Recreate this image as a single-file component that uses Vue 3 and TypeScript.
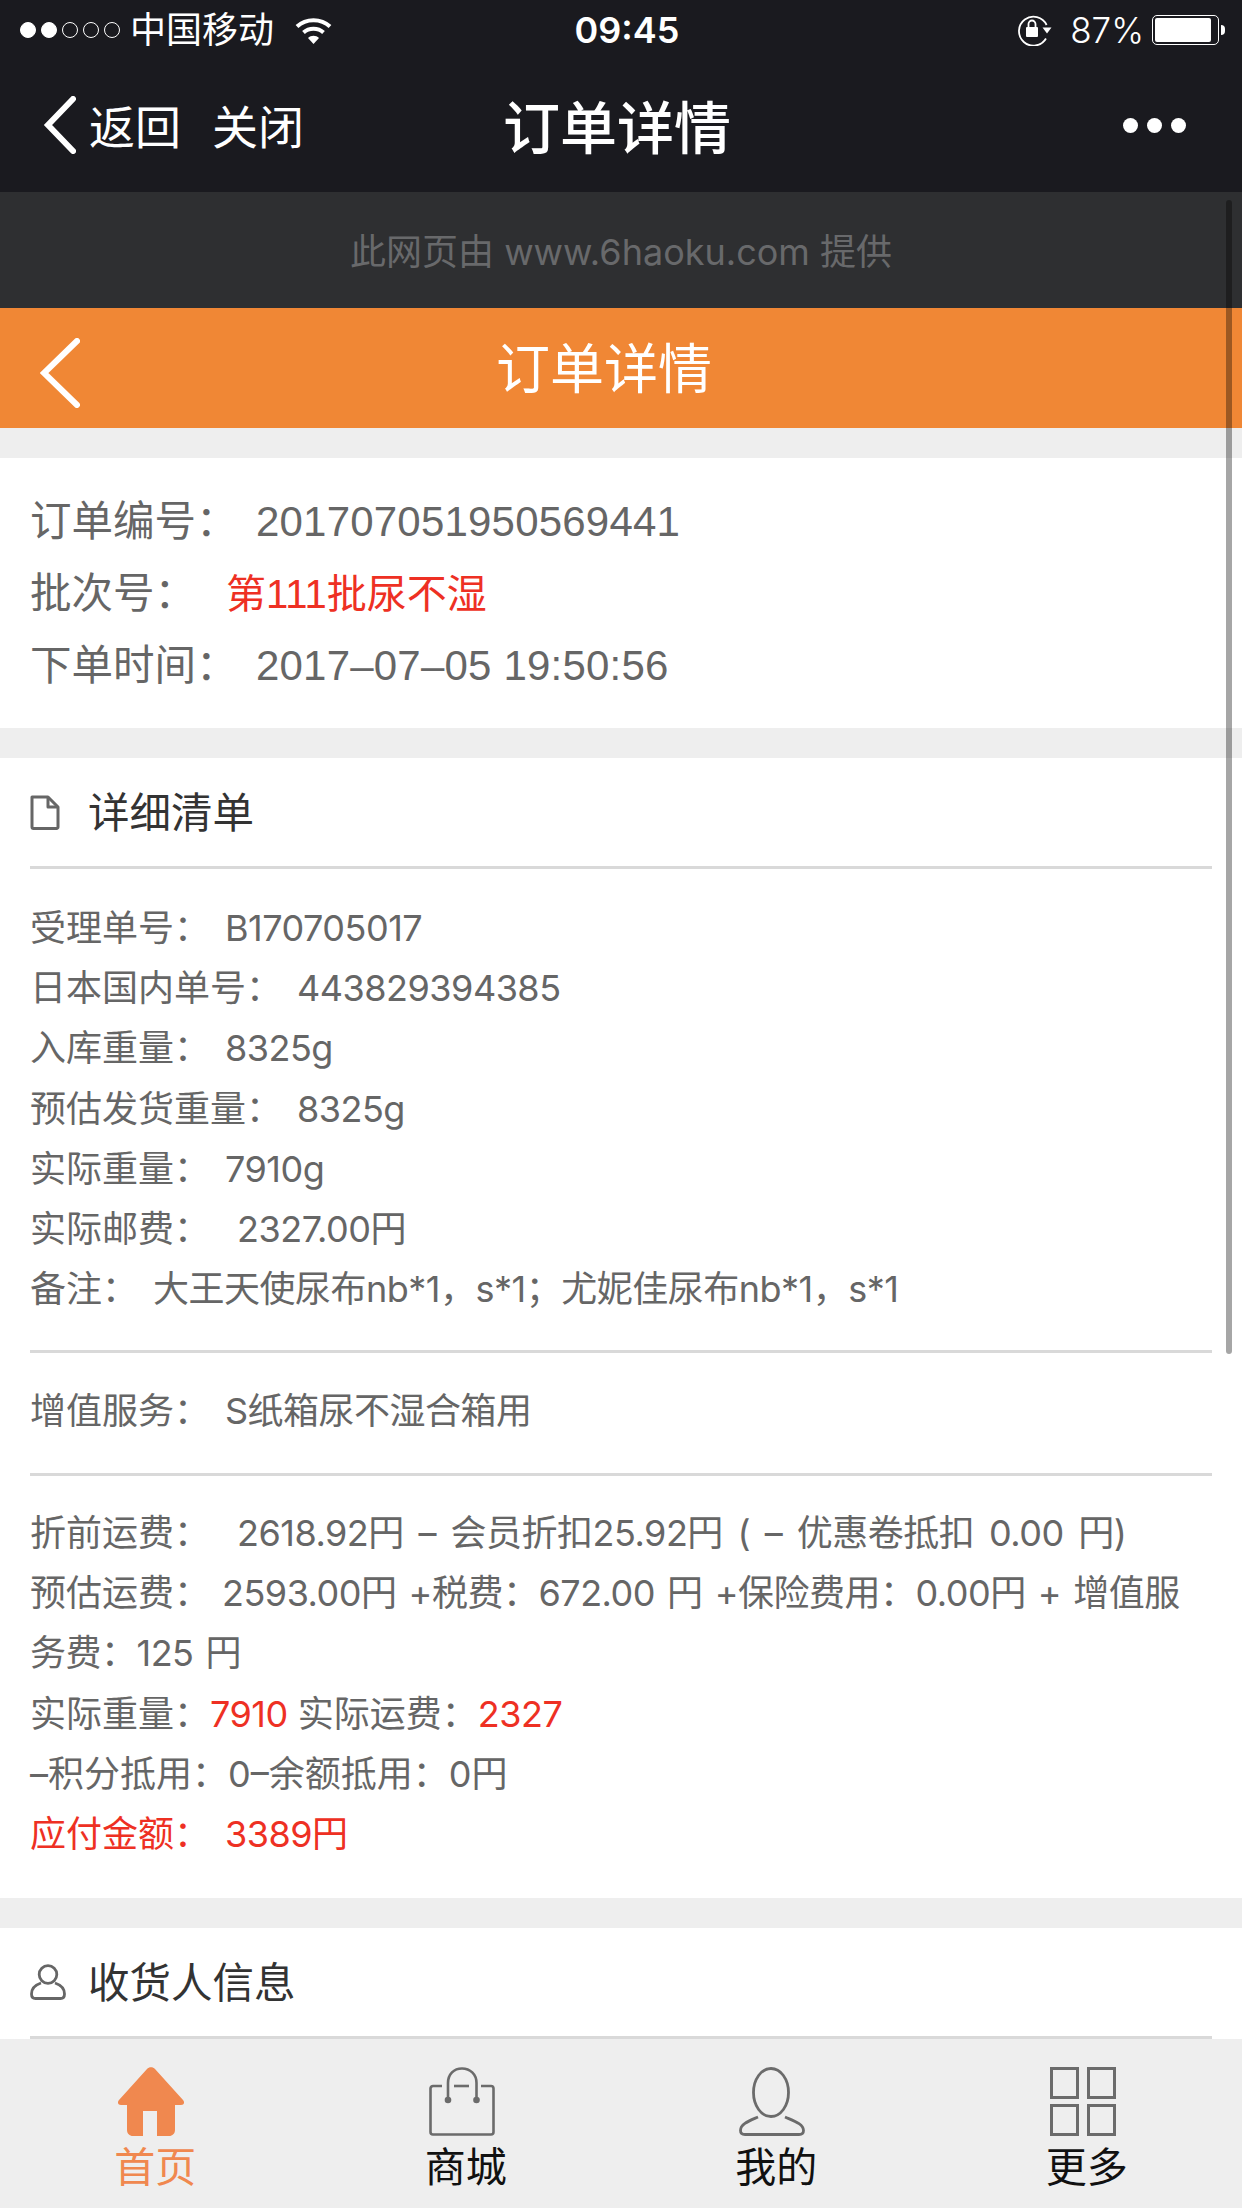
<template>
  <div class="page">
    <header class="wx-head">
      <div class="status">
        <div class="status-left">
          <span class="sig on"></span><span class="sig on"></span><span class="sig"></span><span class="sig"></span><span class="sig"></span>
          <span class="carrier">中国移动</span>
          <svg class="wifi" viewBox="0 0 37 27" width="37" height="27" fill="none" stroke="#fff" stroke-width="4">
            <path d="M2 9.5C11 1 26 1 35 9.5" />
            <path d="M8.5 15.5C14 10.5 23 10.5 28.5 15.5" />
            <path d="M13 21 18.5 27 24 21C21 18 16 18 13 21Z" fill="#fff" stroke="none" />
          </svg>
        </div>
        <div class="clock">09:45</div>
        <div class="status-right">
          <svg class="lock" viewBox="0 0 36 32" width="36" height="32" fill="none">
            <path d="M29 24.5A14.5 14.5 0 1 1 29.6 11" stroke="#fff" stroke-width="1.8" />
            <path d="M25.5 13.5h9l-4.5 6z" fill="#fff" />
            <rect x="9" y="13" width="12" height="10" rx="1" fill="#fff" />
            <path d="M11.5 13V10a3.5 3.5 0 0 1 7 0v3" stroke="#fff" stroke-width="1.8" />
          </svg>
          <span class="pct">87%</span>
          <div class="battery"><div class="battery-fill"></div></div>
          <div class="battery-nub"></div>
        </div>
      </div>
      <nav class="wx-nav">
        <div class="wx-left">
          <svg class="wx-back" viewBox="0 0 33 58" width="33" height="58" fill="none" stroke="#fff" stroke-width="6" stroke-linecap="round">
            <path d="M30 3 5 29 30 55" />
          </svg>
          <span>返回</span>
          <span class="wx-close">关闭</span>
        </div>
        <div class="wx-title">订单详情</div>
        <div class="wx-more"><i></i><i></i><i></i></div>
      </nav>
    </header>

    <div class="provider">此网页由 www.6haoku.com 提供</div>

    <div class="orange-bar">
      <svg class="orange-back" viewBox="0 0 40 70" width="40" height="70" fill="none" stroke="#fff" stroke-width="6" stroke-linecap="round">
        <path d="M37 3 4 35 37 67" />
      </svg>
      <h1>订单详情</h1>
    </div>

    <section class="card order-info">
      <div class="info-row">
        <span class="info-label">订单编号：</span><span class="info-val">201707051950569441</span>
      </div>
      <div class="info-row">
        <span class="info-label short">批次号：</span><span class="info-val red batch">第111批尿不湿</span>
      </div>
      <div class="info-row">
        <span class="info-label">下单时间：</span><span class="info-val">2017–07–05 19:50:56</span>
      </div>
    </section>

    <section class="card">
      <div class="card-head">
        <svg viewBox="0 0 30 35" width="30" height="35" fill="none" stroke="#666" stroke-width="3" stroke-linejoin="round">
          <path d="M2 2h16l10 10v20a1.5 1.5 0 0 1-1.500 1.500H3.500A1.500 1.500 0 0 1 2 32z" />
          <path d="M18 2v10h10" />
        </svg>
        <h2>详细清单</h2>
      </div>
      <div class="block first">
        <div v-for="row in detailRows" :key="row.label" class="line">
          {{ row.label }}<span :class="['val', { wide: row.wide }]">{{ row.value }}</span>
        </div>
      </div>
      <div class="block service">
        <div class="line">增值服务：<span class="val">S纸箱尿不湿合箱用</span></div>
      </div>
      <div class="block price">
        <div class="line">折前运费：<span class="val wide">2618.92円 – 会员折扣25.92円 ( – 优惠卷抵扣 0.00 円)</span></div>
        <div class="line">预估运费：<span class="val mid">2593.00円 +税费：672.00 円 +保险费用：0.00円 + 增值服务费：125 円</span></div>
        <div class="line">实际重量：<span class="red tight">7910</span> 实际运费：<span class="red tight">2327</span></div>
        <div class="line">–积分抵用：0–余额抵用：0円</div>
        <div class="line red">应付金额：<span class="val">3389円</span></div>
      </div>
    </section>

    <section class="card">
      <div class="card-head">
        <svg class="person-small" viewBox="0 0 36 36" width="36" height="36" fill="none" stroke="#666" stroke-width="2.800">
          <circle cx="18" cy="10.500" r="8.800" />
          <path d="M11 19C5 21 1.500 25 1.500 30c0 3 1.500 4.500 4 4.500h25c2.500 0 4-1.500 4-4.500 0-5-3.500-9-9.500-11" />
        </svg>
        <h2>收货人信息</h2>
      </div>
    </section>

    <div class="scrollbar"></div>

    <footer class="tabbar">
      <div v-for="tab in tabs" :key="tab.name" :class="['tab', { active: tab.active }]">
        <svg v-if="tab.name === '首页'" viewBox="0 0 66 69" width="66" height="69">
          <path
            fill="#f0884f"
            d="M29 2C31 -.5 35 -.5 37 2L65 33C67 35.500 66 38 63 38H57V63C57 66.500 54.500 69 51 69H39V44H25V69H15C11.500 69 9 66.500 9 63V38H3C0 38 -1 35.500 1 33Z"
          />
        </svg>
        <svg v-else-if="tab.name === '商城'" viewBox="0 0 66 69" width="66" height="69" fill="none" stroke="#6b6b6b" stroke-width="2.600">
          <path d="M13 19H4A2.500 2.500 0 0 0 1.500 21.500V65A2.500 2.500 0 0 0 4 67.500H62A2.500 2.500 0 0 0 64.500 65V21.500A2.500 2.500 0 0 0 62 19H52" />
          <path d="M25 19H40" />
          <path d="M19 32V16C19 7 25 1.500 33 1.500S47.500 7 47.500 16V32" />
          <circle cx="19" cy="33" r="3.300" fill="#6b6b6b" stroke="none" />
          <circle cx="47.500" cy="33" r="3.300" fill="#6b6b6b" stroke="none" />
        </svg>
        <svg v-else-if="tab.name === '我的'" viewBox="0 0 66 69" width="66" height="69" fill="none" stroke="#6b6b6b" stroke-width="2.800">
          <ellipse cx="32" cy="25.500" rx="17.500" ry="24" />
          <path d="M19 50C10 54 1.500 57 1.500 63.500 1.500 66.500 3 67.500 6 67.500H60C63 67.500 64.500 66.500 64.500 63.500 64.500 57 55 54 46 50" />
        </svg>
        <svg v-else viewBox="0 0 66 69" width="66" height="69" fill="none" stroke="#6b6b6b" stroke-width="3">
          <rect x="1.500" y="1.500" width="26" height="29" />
          <rect x="38.500" y="1.500" width="26" height="29" />
          <rect x="1.500" y="38.500" width="26" height="29" />
          <rect x="38.500" y="38.500" width="26" height="29" />
        </svg>
        <span class="tab-name">{{ tab.name }}</span>
      </div>
    </footer>
  </div>
</template>

<script setup lang="ts">
interface DetailRow {
  label: string;
  value: string;
  wide?: boolean;
}

const detailRows: DetailRow[] = [
  { label: "受理单号：", value: "B170705017" },
  { label: "日本国内单号：", value: "443829394385" },
  { label: "入库重量：", value: "8325g" },
  { label: "预估发货重量：", value: "8325g" },
  { label: "实际重量：", value: "7910g" },
  { label: "实际邮费：", value: "2327.00円", wide: true },
  { label: "备注：", value: "大王天使尿布nb*1，s*1；尤妮佳尿布nb*1，s*1" },
];

const tabs = [
  { name: "首页", active: true },
  { name: "商城", active: false },
  { name: "我的", active: false },
  { name: "更多", active: false },
];
</script>

<style>
html,
body {
  margin: 0;
  background: #eeeeee;
}
</style>

<style scoped>
.page {
  position: relative;
  width: 1242px;
  height: 2208px;
  overflow: hidden;
  background: #eeeeee;
  font-family: Inter, "Noto Sans CJK SC", sans-serif;
  color: #666;
}

.wx-head {
  height: 192px;
  background: #1a1a1f;
  color: #fff;
}

.status {
  display: grid;
  grid-template-columns: 1fr auto 1fr;
  align-items: center;
  height: 60px;
  padding: 0 17px 0 20px;
}

.status-left {
  display: flex;
  align-items: center;
}

.sig {
  box-sizing: border-box;
  width: 16px;
  height: 16px;
  margin-right: 5px;
  border: 1px solid #fff;
  border-radius: 50%;
}

.sig.on {
  background: #fff;
}

.carrier {
  margin-left: 5px;
  font-size: 36px;
  line-height: 60px;
}

.wifi {
  margin-left: 21px;
}

.clock {
  margin-left: 9px;
  font-size: 36px;
  font-weight: 600;
  line-height: 60px;
}

.status-right {
  display: flex;
  align-items: center;
  justify-content: flex-end;
}

.pct {
  margin-left: 17px;
  font-size: 35px;
  font-weight: 300;
}

.battery {
  box-sizing: border-box;
  width: 67px;
  height: 30px;
  margin-left: 8px;
  padding: 2px;
  border: 1px solid #fff;
  border-radius: 5px;
}

.battery-fill {
  width: 56px;
  height: 100%;
  background: #fff;
  border-radius: 2px;
}

.battery-nub {
  width: 4px;
  height: 10px;
  margin-left: 2px;
  background: #fff;
  border-radius: 0 4px 4px 0;
}

.wx-nav {
  display: grid;
  grid-template-columns: 1fr auto 1fr;
  align-items: center;
  height: 132px;
  padding: 0 56px 4px 43px;
  box-sizing: border-box;
}

.wx-left {
  display: flex;
  align-items: center;
  font-size: 46px;
}

.wx-back {
  margin-right: 13px;
  margin-top: 2px;
}

.wx-close {
  margin-left: 31px;
}

.wx-title {
  margin-left: 5px;
  font-size: 57px;
  font-weight: 500;
}

.wx-more {
  display: flex;
  justify-content: flex-end;
  gap: 9px;
  margin-top: 2px;
}

.wx-more i {
  width: 15px;
  height: 15px;
  background: #fff;
  border-radius: 50%;
}

.provider {
  height: 116px;
  background: #2e2f31;
  color: #68696b;
  font-size: 36px;
  line-height: 121px;
  text-align: center;
}

.orange-bar {
  display: flex;
  position: relative;
  align-items: center;
  justify-content: center;
  box-sizing: border-box;
  height: 120px;
  padding: 0 34px 6px 0;
  background: #f08735;
}

.orange-back {
  position: absolute;
  left: 40px;
  top: 30px;
}

.orange-bar h1 {
  margin: 0;
  color: #fff;
  font-size: 54px;
  font-weight: 400;
}

.card {
  margin-top: 30px;
  background: #fff;
}

.order-info {
  padding: 27px 30px;
}

.info-row {
  display: flex;
  align-items: baseline;
  height: 72px;
  line-height: 72px;
  font-size: 41.500px;
}

.info-label {
  width: 226px;
}

.info-label.short {
  width: 196px;
}

.info-val {
  font-family: "Liberation Sans", "Noto Sans CJK SC", sans-serif;
  font-size: 42px;
  letter-spacing: 0.2px;
}

.info-val.batch {
  font-size: 40px;
  letter-spacing: 0;
}

.red {
  color: #ee3023;
}

.card-head {
  display: flex;
  align-items: center;
  box-sizing: border-box;
  height: 111px;
  margin: 0 30px;
  padding-bottom: 4px;
  border-bottom: 3px solid #d9d9d9;
}

.card-head svg {
  flex: none;
  margin-top: 4px;
  margin-right: 28px;
}

.card-head .person-small {
  margin-right: 22px;
}

.card-head h2 {
  margin: 0;
  color: #333;
  font-size: 41.500px;
  font-weight: 400;
}

.block {
  margin: 0 30px;
  font-size: 36px;
}

.first {
  padding: 29px 0 30.600px;
  border-bottom: 3px solid #d9d9d9;
}

.service {
  padding: 28px 0 31.800px;
  border-bottom: 3px solid #d9d9d9;
}

.price {
  padding: 27px 0 34px;
}

.line {
  line-height: 60.200px;
}

.val {
  margin-left: 15px;
  letter-spacing: -0.5px;
  word-spacing: 4px;
}

.val.wide {
  margin-left: 27px;
  word-spacing: 5px;
}

.val.mid {
  margin-left: 12px;
  word-spacing: 2.500px;
}

.tight {
  letter-spacing: -0.5px;
}

.scrollbar {
  position: absolute;
  left: 1226px;
  top: 200px;
  width: 6px;
  height: 1154px;
  background: rgba(0, 0, 0, 0.35);
  border-radius: 3px;
}

.tabbar {
  display: flex;
  position: absolute;
  left: 0;
  right: 0;
  bottom: 0;
  height: 168px;
  background: #eeeeee;
}

.tab {
  display: flex;
  flex: 1;
  flex-direction: column;
  align-items: center;
  padding-top: 27px;
  color: #111;
}

.tab svg {
  margin-right: 8px;
}

.tab-name {
  margin-top: 5px;
  font-size: 41px;
  line-height: 52px;
}

.tab.active {
  color: #f0884f;
}
</style>
